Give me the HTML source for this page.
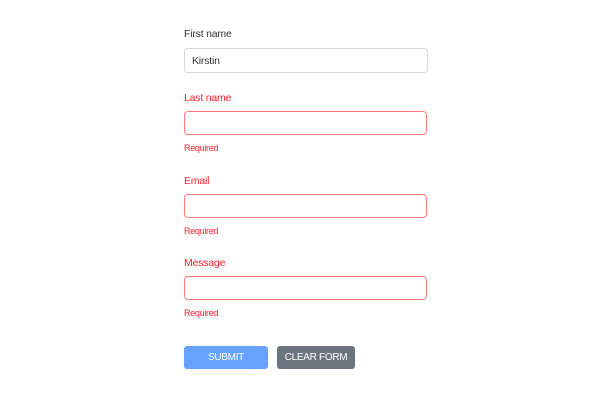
<!DOCTYPE html>
<html><head><style>
body{margin:0;width:600px;height:400px;background:#fff;font-family:"Liberation Sans",sans-serif;position:relative;overflow:hidden}
.l{position:absolute;left:184px;font-size:10.5px;color:#333;letter-spacing:-0.2px}
.r{color:#f5222d}
.req{position:absolute;left:184px;font-size:9px;color:#f5222d;letter-spacing:-0.3px}
.i{position:absolute;left:184px;width:242px;height:23px;border:1px solid #d9d9d9;border-radius:4px;box-sizing:content-box}
.e{border:1.5px solid #ff7b7b;width:241px;height:22px}
.b{position:absolute;top:346px;height:23px;border-radius:3px;color:#fff;font-size:10px;text-align:center;line-height:24px;letter-spacing:-0.3px}
</style></head><body>
<div class="l" style="top:28px">First name</div>
<div class="i" style="top:48px"><span style="position:absolute;left:7px;top:6px;font-size:10.5px;color:#333;letter-spacing:-0.2px">Kirstin</span></div>
<div class="l r" style="top:92px">Last name</div>
<div class="i e" style="top:111px"></div>
<div class="req" style="top:143px">Required</div>
<div class="l r" style="top:175px">Email</div>
<div class="i e" style="top:194px"></div>
<div class="req" style="top:226px">Required</div>
<div class="l r" style="top:257px">Message</div>
<div class="i e" style="top:276px"></div>
<div class="req" style="top:308px">Required</div>
<div class="b" style="left:184px;width:84px;background:#66a3ff">SUBMIT</div>
<div class="b" style="left:277px;width:78px;background:#6c757d">CLEAR FORM</div>
</body></html>
